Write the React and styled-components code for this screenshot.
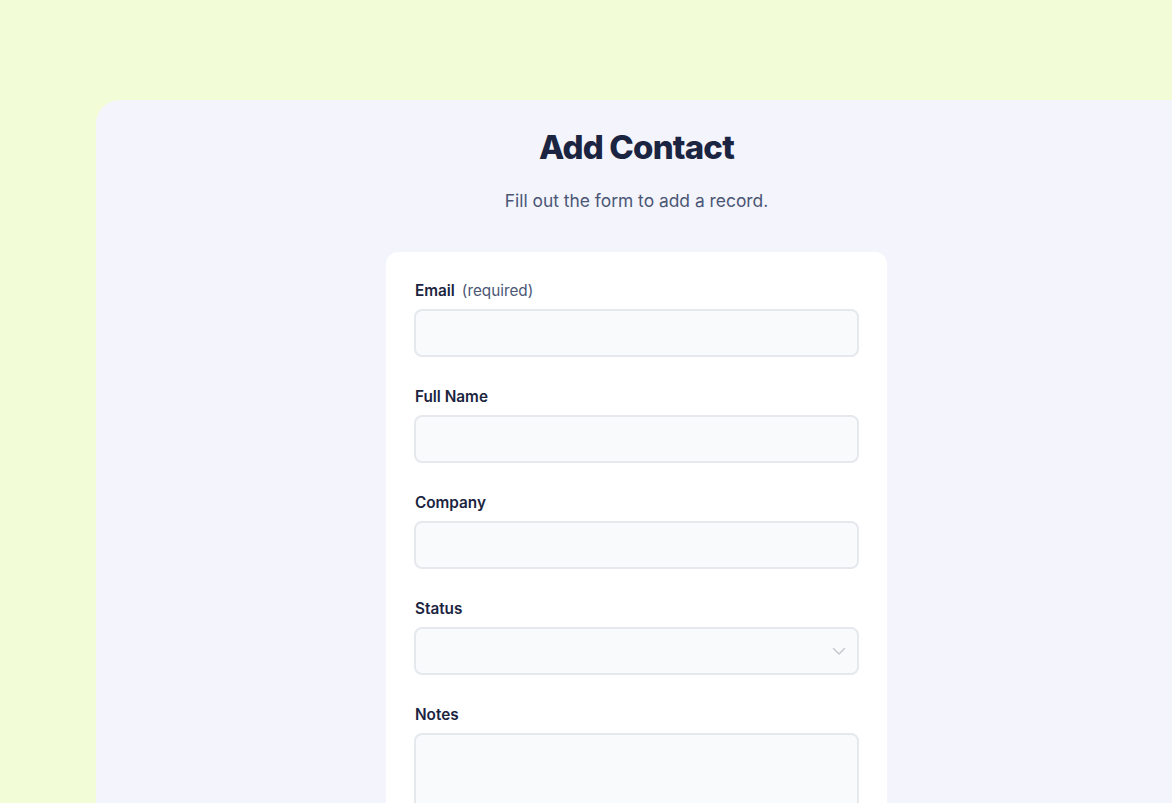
import React from "react"
import styled, { createGlobalStyle } from "styled-components"

const GlobalStyle = createGlobalStyle`
  html, body {
    margin: 0;
    padding: 0;
    background: #f2fdd8;
    overflow: hidden;
    font-family: Inter, "Noto Sans", sans-serif;
  }
`

const Page = styled.div`
  padding-top: 100px;
  padding-left: 96px;
  min-height: 803px;
  box-sizing: border-box;
`

// panel runs off the right edge of the window, content stays centred on 1081px
const Panel = styled.main`
  width: 1120px;
  padding: 27px 39px 0 0;
  box-sizing: border-box;
  min-height: 760px;
  background: #f3f4fc;
  border-radius: 24px;
  display: flex;
  flex-direction: column;
  align-items: center;
`

const Title = styled.h1`
  margin: 0;
  font-size: 33px;
  line-height: 40px;
  font-weight: 800;
  letter-spacing: -0.025em;
  color: #1b2440;
`

const Subtitle = styled.p`
  margin: 22px 0 0;
  font-size: 17.4px;
  line-height: 24px;
  color: #4b5675;
`

const Card = styled.form`
  margin-top: 39px;
  width: 501px;
  box-sizing: border-box;
  background: #ffffff;
  border-radius: 12px;
  padding: 28px 28px 40px;
  display: flex;
  flex-direction: column;
  gap: 29px;
`

const Field = styled.div`
  display: flex;
  flex-direction: column;
  gap: 8px;
`

const Label = styled.label`
  padding-left: 1px;
  font-size: 15.3px;
  line-height: 21px;
  font-weight: 600;
  color: #1b2440;
  display: flex;
  gap: 7px;
`

const Hint = styled.span`
  font-weight: 400;
  color: #4b5675;
`

const inputBase = `
  box-sizing: border-box;
  width: 100%;
  background: #f9fafc;
  border: 2px solid #e5e8ed;
  border-radius: 8px;
  font-family: inherit;
  font-size: 15px;
  color: #1b2440;
  outline: none;
`

const Input = styled.input`
  ${inputBase}
  height: 48px;
  padding: 0 14px;
`

const SelectWrap = styled.div`
  position: relative;
`

const Select = styled.select`
  ${inputBase}
  height: 48px;
  padding: 0 14px;
  appearance: none;
`

const Chevron = styled.svg`
  position: absolute;
  right: 13px;
  top: 19px;
  pointer-events: none;
`

const TextArea = styled.textarea`
  ${inputBase}
  height: 120px;
  padding: 12px 14px;
  resize: none;
`

export default function App() {
  return (
    <>
      <GlobalStyle />
      <Page>
        <Panel>
          <Title>Add Contact</Title>
          <Subtitle>Fill out the form to add a record.</Subtitle>
          <Card>
            <Field>
              <Label>
                Email <Hint>(required)</Hint>
              </Label>
              <Input type="email" />
            </Field>
            <Field>
              <Label>Full Name</Label>
              <Input type="text" />
            </Field>
            <Field>
              <Label>Company</Label>
              <Input type="text" />
            </Field>
            <Field>
              <Label>Status</Label>
              <SelectWrap>
                <Select defaultValue="">
                  <option value=""></option>
                </Select>
                <Chevron width="14" height="10" viewBox="0 0 14 10" fill="none" stroke="#c6cad1" strokeWidth="1.6" strokeLinecap="round" strokeLinejoin="round">
                  <path d="M1.5 2.5l5.5 5.5 5.5-5.5" />
                </Chevron>
              </SelectWrap>
            </Field>
            <Field>
              <Label>Notes</Label>
              <TextArea />
            </Field>
          </Card>
        </Panel>
      </Page>
    </>
  )
}
